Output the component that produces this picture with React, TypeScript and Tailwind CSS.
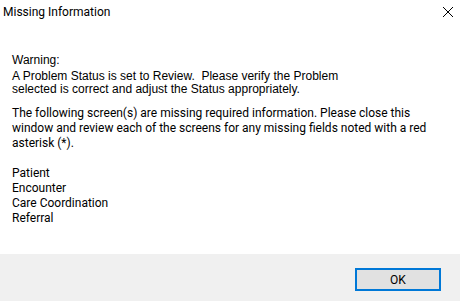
import React from "react";

const segoe = { fontFamily: 'Roboto, "Noto Sans", sans-serif' };

const screens = ["Patient", "Encounter", "Care Coordination", "Referral"];

const App: React.FC = () => {
  return (
    <div className="w-[460px] h-[301px] bg-white flex flex-col text-black overflow-hidden">
      {/* title bar */}
      <div className="h-[31px] flex items-start justify-between pl-[3px] pr-[6px] pt-[4px]">
        <span className="text-[12px] leading-[16px]" style={segoe}>
          Missing Information
        </span>
        <svg width="12" height="12" viewBox="0 0 12 12" className="mt-[2px]">
          <path d="M1 1 L11 11 M11 1 L1 11" stroke="#000" strokeWidth="1" />
        </svg>
      </div>

      {/* body */}
      <div className="flex-1 pl-[12px] pt-[23px] whitespace-nowrap">
        <div className="font-['Liberation_Sans',Arial,sans-serif] text-[12px] leading-[13px]">
          <div className="mb-[3px]">Warning:</div>
          <div>A Problem Status is set to Review.&nbsp; Please verify the Problem</div>
          <div>selected is correct and adjust the Status appropriately.</div>
        </div>
        <div className="mt-[10px] text-[12px] leading-[15px]" style={segoe}>
          <p>The following screen(s) are missing required information. Please close this</p>
          <p>window and review each of the screens for any missing fields noted with a red</p>
          <p>asterisk (*).</p>
          <div className="mt-[15px]">
            {screens.map((s) => (
              <div key={s}>{s}</div>
            ))}
          </div>
        </div>
      </div>

      {/* footer */}
      <div className="h-[47px] bg-[#f0f0f0] flex items-start justify-end pr-[19px] pt-[14px]">
        <button
          className="w-[86px] h-[23px] border-2 border-[#0078d7] bg-[#e1e1e1] text-[12px] leading-none"
          style={segoe}
        >
          OK
        </button>
      </div>
    </div>
  );
};

export default App;
